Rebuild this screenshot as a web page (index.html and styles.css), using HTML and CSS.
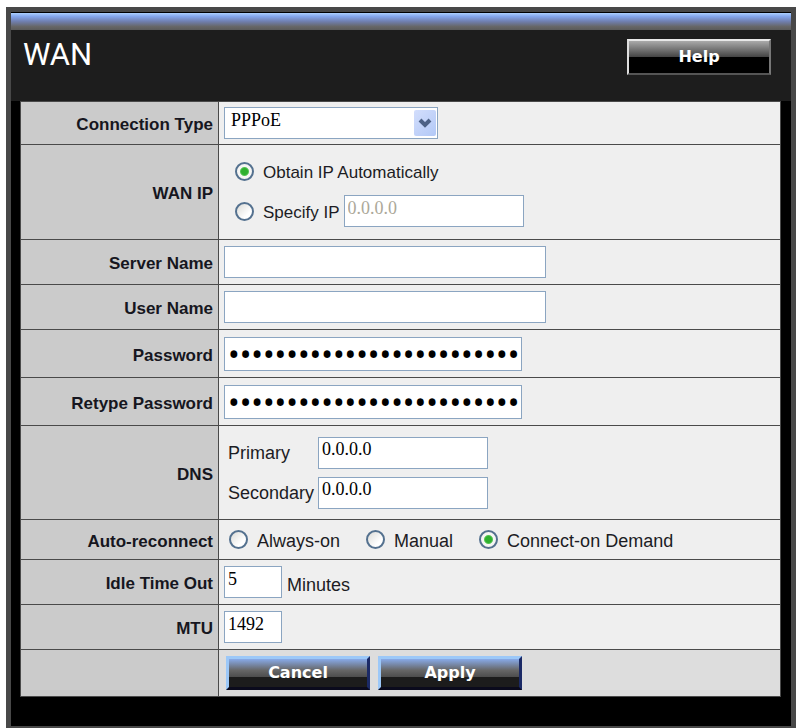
FILE: index.html
```html
<!DOCTYPE html>
<html lang="en">
<head>
<meta charset="utf-8">
<title>WAN</title>
<link rel="stylesheet" href="styles.css">
</head>
<body>
<main class="frame">
  <div class="strip"></div>
  <header class="header">
    <h1>WAN</h1>
    <button type="button" class="btn btn-help">Help</button>
  </header>
  <form class="content">
    <table class="settings">
      <tr class="row-select">
        <th scope="row"><label for="type">Connection Type</label></th>
        <td>
          <div class="select-wrap">
            <select id="type"><option>PPPoE</option></select>
            <span class="arrow"><svg viewBox="0 0 22 26" aria-hidden="true"><path d="M6 10l5 5 5-5" fill="none" stroke="#4d6185" stroke-width="4"/></svg></span>
          </div>
        </td>
      </tr>
      <tr class="row-ip">
        <th scope="row">WAN IP</th>
        <td>
          <div class="stack">
            <div class="line"><input type="radio" name="ip" id="auto" checked><label for="auto">Obtain IP Automatically</label></div>
            <div class="line line-specify"><input type="radio" name="ip" id="specify"><label for="specify">Specify IP</label><input type="text" class="ip-field" value="0.0.0.0" aria-label="IP address" disabled></div>
          </div>
        </td>
      </tr>
      <tr class="row-field">
        <th scope="row"><label for="server">Server Name</label></th>
        <td><input type="text" class="wide" id="server"></td>
      </tr>
      <tr class="row-field">
        <th scope="row"><label for="user">User Name</label></th>
        <td><input type="text" class="wide" id="user"></td>
      </tr>
      <tr class="row-password">
        <th scope="row"><label for="pass">Password</label></th>
        <td><input type="password" id="pass" value="aaaaaaaaaaaaaaaaaaaaaaaaa"></td>
      </tr>
      <tr class="row-password">
        <th scope="row"><label for="pass2">Retype Password</label></th>
        <td><input type="password" id="pass2" value="aaaaaaaaaaaaaaaaaaaaaaaaa"></td>
      </tr>
      <tr class="row-dns">
        <th scope="row">DNS</th>
        <td>
          <div class="dns">
            <label for="dns1">Primary</label><input type="text" id="dns1" value="0.0.0.0">
            <label for="dns2">Secondary</label><input type="text" id="dns2" value="0.0.0.0">
          </div>
        </td>
      </tr>
      <tr class="row-radio">
        <th scope="row">Auto-reconnect</th>
        <td>
          <div class="radios">
            <div class="line"><input type="radio" name="re" id="always"><label for="always">Always-on</label></div>
            <div class="line"><input type="radio" name="re" id="manual"><label for="manual">Manual</label></div>
            <div class="line"><input type="radio" name="re" id="demand" checked><label for="demand">Connect-on Demand</label></div>
          </div>
        </td>
      </tr>
      <tr class="row-field">
        <th scope="row"><label for="idle">Idle Time Out</label></th>
        <td><div class="unit"><input type="text" class="short" id="idle" value="5"><span>Minutes</span></div></td>
      </tr>
      <tr class="row-field">
        <th scope="row"><label for="mtu">MTU</label></th>
        <td><input type="text" class="short" id="mtu" value="1492"></td>
      </tr>
      <tr class="row-actions">
        <th></th>
        <td>
          <div class="actions">
            <button type="button" class="btn btn-blue">Cancel</button>
            <button type="button" class="btn btn-blue">Apply</button>
          </div>
        </td>
      </tr>
    </table>
  </form>
</main>
</body>
</html>
```
FILE: styles.css
```css
* { box-sizing: border-box; }
body {
  margin: 7px 0 0 6px;
  background: #fff;
  color: #1c1c24;
  font: 18px/20px "Liberation Sans", Arial, sans-serif;
}
.frame {
  border: 5px solid #484848;
  border-bottom-width: 3px;
  background: #000;
}
.strip {
  height: 18px;
  border-top: 1px solid #000;
  background: linear-gradient(#acd0ff 0, #84a6ec 20%, #707fae 50%, #666 80%, #5a5a5a 100%);
}
.header {
  display: flex;
  justify-content: space-between;
  align-items: flex-start;
  height: 71px;
  padding: 9px 20px 0 12px;
  background: #1d1d1d;
}
h1 {
  margin: 0;
  color: #fff;
  font: 400 31px/32px Roboto, sans-serif;
}
.content { padding: 0 10px 29px 9px; }
.settings {
  width: 100%;
  border-collapse: collapse;
  table-layout: fixed;
}
th, td { padding: 0; border: 1px solid #4a4a4a; vertical-align: middle; }
th {
  width: 198px;
  padding: 4px 5px 0 0;
  background: #cbcbcb;
  color: #161620;
  text-align: right;
  font-size: 17px;
  font-weight: 700;
}
td { padding-left: 5px; background: #efefef; }
.row-select { height: 43px; }
.row-ip { height: 95px; }
.row-field { height: 45px; }
.row-password { height: 48px; }
.row-dns { height: 94px; }
.row-radio { height: 40px; }
.row-actions { height: 47px; }
.row-actions td { background: #ddd; }
input, select, button { margin: 0; border-radius: 0; }
input[type="text"], input[type="password"], select {
  display: block;
  height: 32px;
  border: 1px solid #8ba5c1;
  background: #fff;
  color: #000;
  font: 18px/20px "Liberation Serif", "Times New Roman", serif;
}
input[type="text"] { padding: 0 3px 6px; }
input[type="text"]:disabled { color: #aca899; }
input[type="text"].wide { width: 322px; }
input[type="text"].short { width: 58px; }
input[type="text"].ip-field { width: 180px; }
input[type="password"] {
  width: 298px;
  height: 34px;
  padding: 0 0 0 3px;
  font: 31px/32px "Noto Sans", sans-serif;
}
.select-wrap { position: relative; width: 214px; }
select { width: 100%; padding: 0 24px 6px 6px; appearance: none; }
.arrow {
  position: absolute;
  top: 3px;
  right: 2px;
  width: 22px;
  height: 26px;
  border-radius: 2px;
  background: linear-gradient(135deg, #d3defc, #b2c8f6);
  pointer-events: none;
}
.arrow svg { display: block; }
input[type="radio"] {
  flex: none;
  width: 19px;
  height: 19px;
  margin-right: 9px;
  border: 2px solid #54718f;
  border-radius: 50%;
  appearance: none;
  background: linear-gradient(135deg, #dcdcd8, #fff 70%);
}
input[type="radio"]:checked {
  background: radial-gradient(circle, #2fb02f 0 3px, #55c455 4px, #f6f6f4 5px);
}
.line { display: flex; align-items: center; }
.line label { padding-top: 3px; }
.stack { display: grid; gap: 12px; padding: 3px 0 0 11px; font-size: 17px; }
.line-specify label { margin-right: 4px; padding-top: 4px; }
.dns {
  display: grid;
  grid-template-columns: 90px 170px;
  row-gap: 8px;
  align-items: center;
  padding-left: 4px;
}
.radios { display: flex; gap: 26px; padding-left: 5px; }
.unit { display: flex; align-items: center; gap: 5px; }
.unit span { padding-top: 6px; }
.actions { display: flex; gap: 8px; padding-left: 2px; }
.btn {
  width: 144px;
  padding: 0;
  color: #fff;
  font: 700 16px/20px "DejaVu Sans", Verdana, sans-serif;
}
.btn-help {
  height: 36px;
  border: 2px solid;
  border-color: #e8e8e8 #777 #555 #ddd;
  background: linear-gradient(#aaa, #444 50%, #000 50%);
}
.btn-blue {
  height: 34px;
  border: 3px solid;
  border-color: #9cc8f8 #1b2a66 #0a0a1c #9cc8f8;
  background: linear-gradient(#88aae8, #666 40%, #4c4c4c 65%, #1c1c1c 66%);
}
```
